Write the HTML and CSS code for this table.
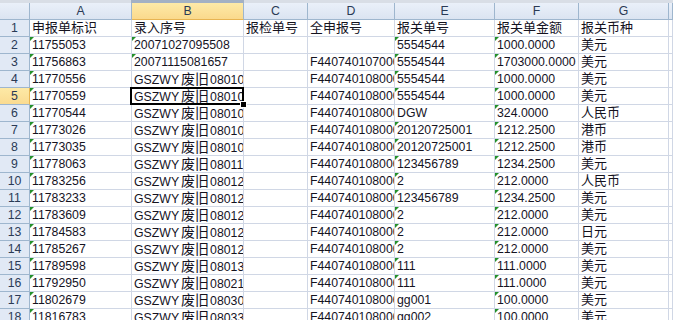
FILE: index.html
```html
<!DOCTYPE html>
<html>
<head>
<meta charset="utf-8">
<link rel="stylesheet" href="styles.css">
</head>
<body>
<div class="topbar"><div class="seg"></div></div>
<div class="sheet">
  <div class="h corner"></div><div class="h">A</div><div class="h hs">B</div><div class="h">C</div><div class="h">D</div><div class="h">E</div><div class="h">F</div><div class="h">G</div><div class="h"></div>

  <div class="r">1</div><div class="c"><span class="cj">申报单标识</span></div><div class="c"><span class="cj">录入序号</span></div><div class="c"><span class="cj">报检单号</span></div><div class="c"><span class="cj">全申报号</span></div><div class="c"><span class="cj">报关单号</span></div><div class="c"><span class="cj">报关单金额</span></div><div class="c"><span class="cj">报关币种</span></div><div class="c"></div>

  <div class="r">2</div><div class="c t">11755053</div><div class="c t">20071027095508</div><div class="c"></div><div class="c"></div><div class="c t">5554544</div><div class="c t">1000.0000</div><div class="c"><span class="cj">美元</span></div><div class="c"></div>

  <div class="r">3</div><div class="c t">11756863</div><div class="c t">20071115081657</div><div class="c"></div><div class="c">F440740107000001</div><div class="c t">5554544</div><div class="c t">1703000.0000</div><div class="c"><span class="cj">美元</span></div><div class="c"></div>

  <div class="r">4</div><div class="c t">11770556</div><div class="c">GSZWY<span class="cm">废旧</span>0801001</div><div class="c"></div><div class="c">F440740108000002</div><div class="c t">5554544</div><div class="c t">1000.0000</div><div class="c"><span class="cj">美元</span></div><div class="c"></div>

  <div class="r rs">5</div><div class="c t">11770559</div><div class="c sel"><span class="clip">GSZWY<span class="cm">废旧</span>0801002</span></div><div class="c"></div><div class="c">F440740108000003</div><div class="c t">5554544</div><div class="c t">1000.0000</div><div class="c"><span class="cj">美元</span></div><div class="c"></div>

  <div class="r">6</div><div class="c t">11770544</div><div class="c">GSZWY<span class="cm">废旧</span>0801003</div><div class="c"></div><div class="c">F440740108000004</div><div class="c">DGW</div><div class="c t">324.0000</div><div class="c"><span class="cj">人民币</span></div><div class="c"></div>

  <div class="r">7</div><div class="c t">11773026</div><div class="c">GSZWY<span class="cm">废旧</span>0801004</div><div class="c"></div><div class="c">F440740108000005</div><div class="c t">20120725001</div><div class="c t">1212.2500</div><div class="c"><span class="cj">港币</span></div><div class="c"></div>

  <div class="r">8</div><div class="c t">11773035</div><div class="c">GSZWY<span class="cm">废旧</span>0801005</div><div class="c"></div><div class="c">F440740108000006</div><div class="c t">20120725001</div><div class="c t">1212.2500</div><div class="c"><span class="cj">港币</span></div><div class="c"></div>

  <div class="r">9</div><div class="c t">11778063</div><div class="c">GSZWY<span class="cm">废旧</span>0801140</div><div class="c"></div><div class="c">F440740108000007</div><div class="c t">123456789</div><div class="c t">1234.2500</div><div class="c"><span class="cj">美元</span></div><div class="c"></div>

  <div class="r">10</div><div class="c t">11783256</div><div class="c">GSZWY<span class="cm">废旧</span>0801201</div><div class="c"></div><div class="c">F440740108000008</div><div class="c t">2</div><div class="c t">212.0000</div><div class="c"><span class="cj">人民币</span></div><div class="c"></div>

  <div class="r">11</div><div class="c t">11783233</div><div class="c">GSZWY<span class="cm">废旧</span>0801202</div><div class="c"></div><div class="c">F440740108000009</div><div class="c t">123456789</div><div class="c t">1234.2500</div><div class="c"><span class="cj">美元</span></div><div class="c"></div>

  <div class="r">12</div><div class="c t">11783609</div><div class="c">GSZWY<span class="cm">废旧</span>0801203</div><div class="c"></div><div class="c">F440740108000010</div><div class="c t">2</div><div class="c t">212.0000</div><div class="c"><span class="cj">美元</span></div><div class="c"></div>

  <div class="r">13</div><div class="c t">11784583</div><div class="c">GSZWY<span class="cm">废旧</span>0801204</div><div class="c"></div><div class="c">F440740108000011</div><div class="c t">2</div><div class="c t">212.0000</div><div class="c"><span class="cj">日元</span></div><div class="c"></div>

  <div class="r">14</div><div class="c t">11785267</div><div class="c">GSZWY<span class="cm">废旧</span>0801205</div><div class="c"></div><div class="c">F440740108000012</div><div class="c t">2</div><div class="c t">212.0000</div><div class="c"><span class="cj">美元</span></div><div class="c"></div>

  <div class="r">15</div><div class="c t">11789598</div><div class="c">GSZWY<span class="cm">废旧</span>0801301</div><div class="c"></div><div class="c">F440740108000013</div><div class="c t">111</div><div class="c t">111.0000</div><div class="c"><span class="cj">美元</span></div><div class="c"></div>

  <div class="r">16</div><div class="c t">11792950</div><div class="c">GSZWY<span class="cm">废旧</span>0802140</div><div class="c"></div><div class="c">F440740108000014</div><div class="c t">111</div><div class="c t">111.0000</div><div class="c"><span class="cj">美元</span></div><div class="c"></div>

  <div class="r">17</div><div class="c t">11802679</div><div class="c">GSZWY<span class="cm">废旧</span>0803001</div><div class="c"></div><div class="c">F440740108000015</div><div class="c">gg001</div><div class="c t">100.0000</div><div class="c"><span class="cj">美元</span></div><div class="c"></div>

  <div class="r">18</div><div class="c t">11816783</div><div class="c">GSZWY<span class="cm">废旧</span>0803301</div><div class="c"></div><div class="c">F440740108000016</div><div class="c">gg002</div><div class="c t">100.0000</div><div class="c"><span class="cj">美元</span></div><div class="c"></div>
</div>
</body>
</html>
```

FILE: styles.css
```css
html, body {
  margin: 0;
  padding: 0;
  background: #ffffff;
}
body {
  width: 673px;
  height: 320px;
  overflow: hidden;
  font-family: "Liberation Sans", Arial, "Noto Sans CJK SC", sans-serif;
}
.topbar {
  height: 3px;
  background: #d9dee6;
  display: flex;
}
.topbar .seg {
  margin-left: 131px;
  width: 113px;
  background: #a3b1c4;
}
.sheet {
  display: grid;
  grid-template-columns: 30px 102px 112px 64px 87px 100px 84px 90px 1fr;
  grid-auto-rows: 17px;
}
.h, .r, .c {
  box-sizing: border-box;
  border-right: 1px solid #d0d7e5;
  border-bottom: 1px solid #d0d7e5;
  white-space: nowrap;
  overflow: hidden;
}
.h {
  background: linear-gradient(#eaf0f9, #dbe4f1);
  border-right-color: #9eb6ce;
  border-bottom-color: #9eb6ce;
  color: #2a3a55;
  font-size: 12.3px;
  line-height: 16px;
  text-align: center;
}
.h.hs {
  background: linear-gradient(#fdeaa8, #fad98c);
  border-bottom-color: #e7b452;
}
.r {
  background: #e1e9f5;
  border-right-color: #9eb6ce;
  border-bottom-color: #9eb6ce;
  color: #2a3a55;
  font-size: 12.3px;
  line-height: 16px;
  text-align: center;
}
.r.rs {
  background: linear-gradient(#fde9a6, #fadb91);
  border-right-color: #e7b452;
}
.c {
  position: relative;
  color: #15131f;
  font-size: 12.3px;
  line-height: 16px;
  padding-left: 2px;
}
.cj {
  font-family: "Noto Sans CJK SC", sans-serif;
  font-size: 13px;
  line-height: 1;
}
.cm {
  font-family: "Noto Sans CJK SC", sans-serif;
  font-size: 14px;
  line-height: 1;
  margin: 0 1px 0 2px;
}
.t::before {
  content: "";
  position: absolute;
  left: 0;
  top: 0;
  border-top: 4px solid #24902a;
  border-right: 4px solid transparent;
}
.c.sel {
  overflow: visible;
  z-index: 2;
}
.c.sel .clip {
  display: block;
  overflow: hidden;
}
.c.sel::after {
  content: "";
  position: absolute;
  left: -2px;
  top: -1px;
  right: -1px;
  bottom: -1px;
  border: 2px solid #000000;
}
.c.sel::before {
  content: "";
  position: absolute;
  right: -4px;
  bottom: -4px;
  width: 5px;
  height: 5px;
  background: #000000;
  border: 1px solid #ffffff;
  z-index: 3;
}
```
